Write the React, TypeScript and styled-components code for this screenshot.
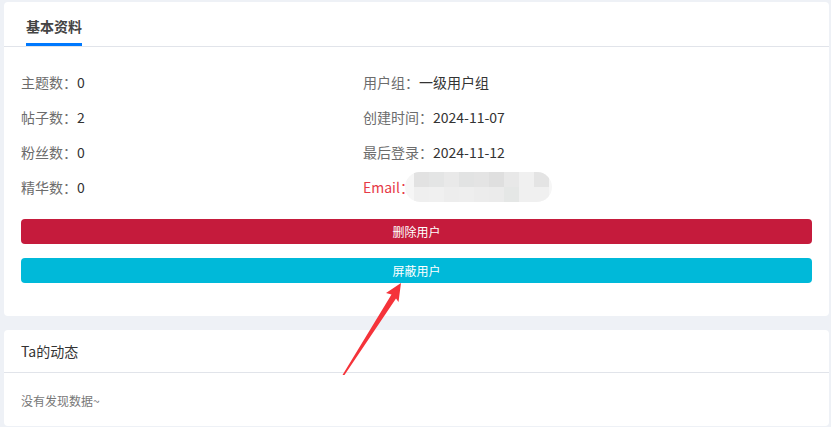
import React from "react";
import styled, { createGlobalStyle } from "styled-components";

const GlobalStyle = createGlobalStyle`
  html, body {
    margin: 0;
    padding: 0;
    background: #eef1f6;
  }
  body {
    font-family: "Noto Sans CJK SC", "Noto Sans", sans-serif;
    font-size: 14px;
    color: #333;
  }
`;

type InfoItem = { label: string; value: string; danger?: boolean; masked?: boolean };

const leftInfo: InfoItem[] = [
  { label: "主题数：", value: "0" },
  { label: "帖子数：", value: "2" },
  { label: "粉丝数：", value: "0" },
  { label: "精华数：", value: "0" },
];

const rightInfo: InfoItem[] = [
  { label: "用户组：", value: "一级用户组" },
  { label: "创建时间：", value: "2024-11-07" },
  { label: "最后登录：", value: "2024-11-12" },
  { label: "Email：", value: "", danger: true, masked: true },
];

// 모자이크 처리된 이메일 영역 색상
const mosaicTop = ["#e2e2e2", "#e4e5e5", "#e9e9e9", "#e2e3e3", "#e4e4e4", "#dfdfdf", "#e8e8e8", "#f0f0f0", "#e4e4e4"];
const mosaicBottom = ["#efefef", "#f0f0f0", "#ededed", "#eeeeee", "#ececec", "#ebebeb", "#e5e7e6", "#f0f0f0", "#f0f0f0"];

function App() {
  return (
    <Page>
      <GlobalStyle />
      <Card>
        <TabBar>
          <Tab $active>基本资料</Tab>
        </TabBar>

        <InfoGrid>
          <InfoColumn>
            {leftInfo.map((item) => (
              <InfoRow key={item.label}>
                <Label>{item.label}</Label>
                <Value>{item.value}</Value>
              </InfoRow>
            ))}
          </InfoColumn>
          <InfoColumn>
            {rightInfo.map((item) => (
              <InfoRow key={item.label}>
                <Label $danger={item.danger}>{item.label}</Label>
                {item.masked ? (
                  <Mosaic>
                    {mosaicTop.concat(mosaicBottom).map((c, i) => (
                      <MosaicCell key={i} $color={c} />
                    ))}
                  </Mosaic>
                ) : (
                  <Value>{item.value}</Value>
                )}
              </InfoRow>
            ))}
          </InfoColumn>
        </InfoGrid>

        <Actions>
          <ActionButton $bg="#c51b3c">删除用户</ActionButton>
          <ActionButton $bg="#00b9d9">屏蔽用户</ActionButton>
        </Actions>
      </Card>

      <Card>
        <CardTitle>Ta的动态</CardTitle>
        <EmptyText>没有发现数据~</EmptyText>
      </Card>

      <Arrow width="831" height="427" viewBox="0 0 831 427">
        <polygon
          points="401,283 386,293 391.5,294.5 342.5,375 344.5,375 396,298.5 398.5,302"
          fill="#f5333a"
        />
      </Arrow>
    </Page>
  );
}

export default App;

const Page = styled.div`
  position: relative;
  display: flex;
  flex-direction: column;
  gap: 14px;
  padding: 2px 2px 0 4px;
  height: 427px;
  box-sizing: border-box;
  overflow: hidden;
`;

const Card = styled.div`
  background: #fff;
  border-radius: 4px;
`;

const TabBar = styled.div`
  display: flex;
  height: 44px;
  padding-left: 22px;
  border-bottom: 1px solid #e1e4ea;
`;

const Tab = styled.div<{ $active?: boolean }>`
  box-sizing: border-box;
  height: 44px;
  padding-top: 14px;
  line-height: 20px;
  font-size: 14px;
  font-weight: 700;
  color: #444;
  border-bottom: 3px solid ${(p) => (p.$active ? "#0079fe" : "transparent")};
`;

const InfoGrid = styled.div`
  display: grid;
  grid-template-columns: 342px 1fr;
  padding: 17px 17px 1px;
`;

const InfoColumn = styled.div`
  display: flex;
  flex-direction: column;
`;

const InfoRow = styled.div`
  display: flex;
  align-items: center;
  height: 35px;
`;

const Label = styled.span<{ $danger?: boolean }>`
  color: ${(p) => (p.$danger ? "#e63946" : "#6c6c6c")};
`;

const Value = styled.span`
  color: #333;
`;

const Mosaic = styled.div`
  display: grid;
  grid-template-columns: repeat(9, 15px);
  grid-template-rows: 15px 15px;
  padding: 0 3px 0 9px;
  margin-left: -9px;
  background: #f6f6f6;
  border-radius: 15px;
  overflow: hidden;
`;

const MosaicCell = styled.div<{ $color: string }>`
  background: ${(p) => p.$color};
`;

const Actions = styled.div`
  display: flex;
  flex-direction: column;
  gap: 14px;
  padding: 14px 17px 33px;
`;

const ActionButton = styled.button<{ $bg: string }>`
  height: 25px;
  border: none;
  border-radius: 4px;
  background: ${(p) => p.$bg};
  color: #fff;
  font-family: inherit;
  font-size: 12px;
  padding: 0;
`;

const CardTitle = styled.div`
  height: 42px;
  line-height: 42px;
  padding-left: 17px;
  font-size: 14px;
  color: #333;
  border-bottom: 1px solid #e1e4ea;
`;

const EmptyText = styled.div`
  padding: 18px 17px 15px;
  line-height: 20px;
  font-size: 12px;
  color: #777;
`;

const Arrow = styled.svg`
  position: absolute;
  left: 0;
  top: 0;
  pointer-events: none;
`;
